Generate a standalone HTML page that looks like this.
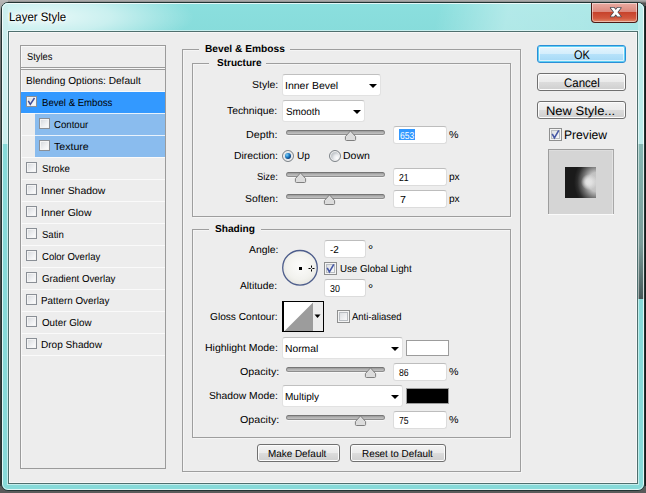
<!DOCTYPE html>
<html>
<head>
<meta charset="utf-8">
<title>Layer Style</title>
<style>
html,body{margin:0;padding:0;}
body{width:646px;height:493px;overflow:hidden;position:relative;background:#1c1c1c;font-family:"Liberation Sans",sans-serif;font-size:10.2px;color:#000;}
*{box-sizing:border-box;}
.abs{position:absolute;}
#bgtop{left:0;top:0;width:646px;height:6px;background:linear-gradient(#b2b2b2,#8c8c8c 2px,#555 3px);}
#bgleft{left:0;top:0;width:8px;height:493px;background:linear-gradient(#b8b8b8,#777 30px,#444 300px,#333);}
#bgbot{left:0;top:486px;width:646px;height:7px;background:#5a5a5a;}
#win{left:1px;top:2px;width:644px;height:489px;border:1px solid #223433;border-radius:7px;background:#87dad9;overflow:hidden;}
#win .hl{left:0;top:0;width:642px;height:487px;border:1px solid rgba(255,255,255,.75);border-radius:6px;}
#titlebg{left:0;top:0;width:642px;height:29px;background:
 radial-gradient(ellipse 150px 34px at 42px 14px,rgba(255,255,255,.8),rgba(255,255,255,.55) 45%,rgba(255,255,255,0) 100%),
 linear-gradient(100deg,rgba(255,255,255,0) 430px,rgba(255,255,255,.35) 500px,rgba(255,255,255,.3) 590px,rgba(255,255,255,.25) 640px),
 linear-gradient(#8bdfde,#87dcdb);}
#lside{left:0;top:0;width:6px;height:141px;background:#cbefee;}
#rside{left:636px;top:0;width:6px;height:141px;background:#bcebea;}
#rdark{left:636px;top:141px;width:6px;height:155px;background:linear-gradient(#86b8b3,#7a9c99 100px,#4b5f5f 150px,#475656);}
.ttl{margin-top:0;font-size:12.3px;line-height:14px;height:14px;text-shadow:0 0 4px #fff,0 0 6px #fff,0 0 8px #fff;}
#close{left:589px;top:0;width:47px;height:20px;border:1px solid #4d1b16;border-top:none;border-radius:0 0 4px 4px;background:linear-gradient(#e9aba2,#dc8a7e 45%,#c7432c 50%,#d2583e 80%,#e08a6a);box-shadow:inset 0 0 0 1px rgba(255,255,255,.45);}
#client{left:8px;top:31px;width:630px;height:453px;border:1px solid #4f6f6e;background:#ededed;box-shadow:inset 0 0 0 1px #f7f7f7,0 0 0 1px rgba(255,255,255,.5);}
.t{position:absolute;white-space:nowrap;line-height:12px;height:12px;transform-origin:0 50%;margin-top:0;}
.b{font-weight:bold;}
#panel{left:20px;top:45px;width:146px;height:424px;border:1px solid #9b9b9b;box-shadow:inset 1px 1px 0 #f8f8f8;}
.row{position:absolute;left:21px;width:144px;height:22px;border-bottom:1px solid #fafafa;}
.cb{position:absolute;width:13px;height:13px;border:1px solid #8e8f8f;background:linear-gradient(135deg,#d4d7db,#f0f1f3 60%,#fff);box-shadow:inset 0 0 0 1px #f4f4f4,inset 0 0 0 2px #b9bdc2;}
.cb.s{width:11px;height:11px;box-shadow:inset 0 0 0 1px #f4f4f4;border-color:#8a8f96;}
.grp{position:absolute;border:1px solid #9e9e9e;box-shadow:1px 1px 0 #f5f5f5,inset 1px 1px 0 #f5f5f5;}
.gap{position:absolute;background:#ededed;height:3px;}
.dd{position:absolute;height:22px;border:1px solid #e2e2e2;border-top-color:#c0c0c0;border-radius:3px;background:#fff;}
.dd i{position:absolute;top:9px;width:0;height:0;border-left:4px solid transparent;border-right:4px solid transparent;border-top:4px solid #000;}
.inp{position:absolute;width:54px;height:18px;border:1px solid #dcdcdc;border-top-color:#bdbdbd;border-radius:3px;background:#fff;}
.trk{position:absolute;left:286px;width:99px;height:5px;border-radius:3px;background:linear-gradient(#9a9a9a,#b8b8b8 60%,#c2c2c2);border:1px solid #888;border-top-color:#767676;border-bottom-color:#8e8e8e;box-shadow:0 1px 0 #f7f7f7;}
.btn{position:absolute;border:1px solid #707070;border-radius:3px;background:linear-gradient(#f3f3f3,#ebebeb 48%,#dcdcdc 52%,#cfcfcf);box-shadow:inset 0 0 0 1px #fcfcfc;}
.big{font-size:12.4px;line-height:14px;height:14px;margin-top:0;}
.sw{position:absolute;left:406px;width:43px;height:16px;border:1px solid #9c9c9c;}
</style>
</head>
<body>
<div class="abs" id="bgtop"></div>
<div class="abs" id="bgleft"></div>
<div class="abs" id="bgbot"></div>
<div class="abs" id="win">
  <div class="abs" id="titlebg"></div>
  <div class="abs" id="lside"></div>
  <div class="abs" id="rside"></div>
  <div class="abs" id="rdark"></div>
  <div class="abs hl"></div>
  <div class="abs" id="close">
    <svg class="abs" style="left:17px;top:3px" width="14" height="12" viewBox="0 0 14 12"><path d="M1.6 1.8 H5 L11.9 10.6 H8.5 Z M8.5 1.8 H11.9 L5 10.6 H1.6 Z" fill="#44464e" stroke="#44464e" stroke-width="1.5" stroke-linejoin="round"/><path d="M1.6 1.8 H5 L11.9 10.6 H8.5 Z M8.5 1.8 H11.9 L5 10.6 H1.6 Z" fill="#fff"/></svg>
  </div>
</div>
<div class="abs" id="client"></div>

<div class="abs" id="panel"></div>
<div class="abs" style="left:21px;top:67px;width:144px;height:3px;border-top:1px solid #9b9b9b;border-bottom:1px solid #9b9b9b;background:#f8f8f8"></div>
<div class="row" style="top:70px"></div>
<div class="row" style="top:92px;background:#3399ff"></div>
<div class="row" style="top:113px;left:35px;width:130px;height:23px;background:#8abcee;border-top:1px solid #e8f2fc;border-bottom:none"></div>
<div class="row" style="top:135px;left:35px;width:130px;height:23px;background:#8abcee;border-top:1px solid #e8f2fc;border-bottom:none"></div>
<div class="abs" style="left:21px;top:135px;width:14px;height:1px;background:#fafafa"></div>
<div class="abs" style="left:21px;top:157px;width:144px;height:1px;background:#fafafa"></div>
<div class="row" style="top:158px"></div><div class="row" style="top:180px"></div><div class="row" style="top:202px"></div><div class="row" style="top:224px"></div><div class="row" style="top:246px"></div><div class="row" style="top:268px"></div><div class="row" style="top:290px"></div><div class="row" style="top:312px"></div><div class="row" style="top:334px"></div>
<div class="cb s" style="left:26px;top:96px"></div><svg class="abs" style="left:26px;top:96px" width="11" height="11" viewBox="0 0 11 11"><path d="M2.3 4.9 L4.3 8.3 L8.5 2" fill="none" stroke="#3f4f9a" stroke-width="1.5"/></svg>
<div class="cb s" style="left:39px;top:118px"></div><div class="cb s" style="left:39px;top:140px"></div>
<div class="cb s" style="left:26px;top:162px"></div><div class="cb s" style="left:26px;top:184px"></div><div class="cb s" style="left:26px;top:206px"></div><div class="cb s" style="left:26px;top:228px"></div><div class="cb s" style="left:26px;top:250px"></div><div class="cb s" style="left:26px;top:272px"></div><div class="cb s" style="left:26px;top:294px"></div><div class="cb s" style="left:26px;top:316px"></div><div class="cb s" style="left:26px;top:338px"></div>

<div class="grp" style="left:182px;top:49px;width:339px;height:423px"></div>
<div class="gap" style="left:199px;top:48px;width:91px"></div>
<div class="grp" style="left:192px;top:63px;width:319px;height:154px"></div>
<div class="gap" style="left:209px;top:62px;width:57px"></div>
<div class="grp" style="left:192px;top:229px;width:319px;height:209px"></div>
<div class="gap" style="left:209px;top:228px;width:52px"></div>

<div class="dd" style="left:282px;top:74px;width:99px"><i style="left:86px"></i></div>
<div class="dd" style="left:282px;top:100px;width:83px"><i style="left:70px"></i></div>
<div class="trk" style="top:130px"></div>
<div class="inp" style="left:393px;top:126px"></div>
<div class="abs" style="left:399px;top:129px;width:16px;height:11px;background:#3399ff"></div>
<div class="t" style="left:399.5px;top:130px;color:#fff;transform:scaleX(0.84) rotate(0.03deg)">653</div>
<div class="trk" style="top:172px"></div>
<div class="inp" style="left:393px;top:168px"></div>
<div class="trk" style="top:194px"></div>
<div class="inp" style="left:393px;top:190px"></div>

<div class="inp" style="left:324px;top:240px;width:42px"></div>
<div class="t" style="left:368px;top:244px;font-size:13px">°</div>
<div class="cb" style="left:324px;top:262px"></div><svg class="abs" style="left:324px;top:262px" width="13" height="13" viewBox="0 0 13 13"><path d="M3.2 5.8 L5.4 9.8 L9.8 2.4" fill="none" stroke="#4557a5" stroke-width="1.6"/></svg>
<div class="inp" style="left:324px;top:279px;width:42px"></div>
<div class="t" style="left:368px;top:283px;font-size:13px">°</div>
<div class="cb" style="left:337px;top:310px"></div>
<div class="dd" style="left:282px;top:337px;width:121px"><i style="left:108px"></i></div>
<div class="sw" style="top:340px;background:#fff"></div>
<div class="trk" style="top:367px"></div>
<div class="inp" style="left:393px;top:363px"></div>
<div class="dd" style="left:282px;top:385px;width:121px"><i style="left:108px"></i></div>
<div class="sw" style="top:388px;background:#000"></div>
<div class="trk" style="top:415px"></div>
<div class="inp" style="left:393px;top:411px"></div>

<svg class="abs" style="left:344px;top:130px" width="13" height="12" viewBox="0 0 13 12"><path d="M6.5 0.9 L11.6 6.6 V9.4 Q11.6 10.5 10.5 10.5 H2.5 Q1.4 10.5 1.4 9.4 V6.6 Z" fill="#dcdcdc" stroke="#7f7f7f" stroke-width="1"/></svg><svg class="abs" style="left:294px;top:172px" width="13" height="12" viewBox="0 0 13 12"><path d="M6.5 0.9 L11.6 6.6 V9.4 Q11.6 10.5 10.5 10.5 H2.5 Q1.4 10.5 1.4 9.4 V6.6 Z" fill="#dcdcdc" stroke="#7f7f7f" stroke-width="1"/></svg><svg class="abs" style="left:323px;top:194px" width="13" height="12" viewBox="0 0 13 12"><path d="M6.5 0.9 L11.6 6.6 V9.4 Q11.6 10.5 10.5 10.5 H2.5 Q1.4 10.5 1.4 9.4 V6.6 Z" fill="#dcdcdc" stroke="#7f7f7f" stroke-width="1"/></svg><svg class="abs" style="left:364px;top:367px" width="13" height="12" viewBox="0 0 13 12"><path d="M6.5 0.9 L11.6 6.6 V9.4 Q11.6 10.5 10.5 10.5 H2.5 Q1.4 10.5 1.4 9.4 V6.6 Z" fill="#dcdcdc" stroke="#7f7f7f" stroke-width="1"/></svg><svg class="abs" style="left:354px;top:415px" width="13" height="12" viewBox="0 0 13 12"><path d="M6.5 0.9 L11.6 6.6 V9.4 Q11.6 10.5 10.5 10.5 H2.5 Q1.4 10.5 1.4 9.4 V6.6 Z" fill="#dcdcdc" stroke="#7f7f7f" stroke-width="1"/></svg>

<div class="abs" style="left:282px;top:150px;width:12px;height:12px;border-radius:6px;border:1px solid #7d8388;background:radial-gradient(circle at 5px 5px,#f4f4f4,#e2e6ea 3.5px,#c9cdd1 5px);box-shadow:inset 0 0 0 1px #f2f2f2"></div>
<div class="abs" style="left:285px;top:153px;width:6px;height:6px;border-radius:3px;background:radial-gradient(circle at 2px 2px,#7fd0f5,#1b78c2 2.4px,#0f3f78 4px)"></div>
<div class="abs" style="left:329px;top:150px;width:12px;height:12px;border-radius:6px;border:1px solid #7d8388;background:radial-gradient(circle at 7px 7px,#fdfdfd,#e9ebee 3px,#c6cace 5.5px);box-shadow:inset 0 0 0 1px #f2f2f2"></div>

<svg class="abs" style="left:281px;top:249px" width="38" height="38" viewBox="0 0 38 38">
<defs><radialGradient id="dg" cx="0.5" cy="0.45" r="0.55"><stop offset="0" stop-color="#fcfcfb"/><stop offset="0.7" stop-color="#f2f2ee"/><stop offset="1" stop-color="#e6e6e0"/></radialGradient></defs>
<circle cx="19" cy="18.8" r="17.3" fill="url(#dg)" stroke="#4e5e8c" stroke-width="1.3"/>
<rect x="18" y="18" width="3" height="3" fill="#000"/>
<path d="M27.5 19.5 H29.7 M31.3 19.5 H33.5 M30.5 16.5 V18.7 M30.5 20.3 V22.5" stroke="#000" stroke-width="1" fill="none"/>
</svg>

<div class="abs" style="left:282px;top:301px;width:42px;height:31px;background:#fff;border:1px solid #000;border-left-width:2px"></div>
<svg class="abs" style="left:284px;top:302px" width="39" height="29" viewBox="0 0 39 29"><path d="M0.5 29 L29 0.5 V29 Z" fill="#9c9c9c"/><rect x="29" y="0" width="10" height="29" fill="#ececec"/><path d="M30.5 12.5 H36.5 L33.5 16 Z" fill="#000"/></svg>

<div class="btn" style="left:257px;top:444px;width:83px;height:18px"></div>
<div class="btn" style="left:350px;top:444px;width:96px;height:18px"></div>
<div class="btn" style="left:537px;top:45px;width:89px;height:18px;border-color:#2c8ed6;background:linear-gradient(#e6f5fd,#d4eefc 48%,#b6e2fa 52%,#a3d8f6);box-shadow:inset 0 0 0 1px #5fd0f5,inset 0 0 0 2px rgba(255,255,255,.6)"></div>
<div class="btn" style="left:537px;top:73px;width:89px;height:18px"></div>
<div class="btn" style="left:537px;top:101px;width:89px;height:18px"></div>
<div class="cb" style="left:549px;top:128px"></div><svg class="abs" style="left:549px;top:128px" width="13" height="13" viewBox="0 0 13 13"><path d="M3.2 5.8 L5.4 9.8 L9.8 2.4" fill="none" stroke="#4557a5" stroke-width="1.6"/></svg>
<div class="abs" style="left:548px;top:149px;width:66px;height:65px;background:#d5d5d5;border:1px solid #9d9d9d;border-right-color:#a8a8a8;border-bottom:none;box-shadow:0 1px 0 #fafafa,inset -1px 0 0 #e2e2e2,inset 0 1px 0 #dddddd"></div>
<div class="abs" style="left:565px;top:167px;width:31px;height:31px;background:radial-gradient(circle at 24px 15px,#e6e6e6 0,#e0e0e0 3px,rgba(222,222,222,0) 8px),radial-gradient(ellipse 22px 27px at 31px 15px,#cdcdcd 0,#c2c2c2 35%,#6c6c6c 62%,#2c2c2c 85%,#1a1a1a 100%),#1a1a1a"></div>

<div id="t_styles" class="t " style="left:27.2px;top:51px;transform:scale(0.911,1) rotate(0.03deg)">Styles</div>
<div id="t_blend" class="t " style="left:26.0px;top:75px;transform:scale(0.993,1) rotate(0.03deg)">Blending Options: Default</div>
<div id="t_bevel" class="t " style="left:41.6px;top:97px;transform:scale(0.941,1) rotate(0.03deg)">Bevel &amp; Emboss</div>
<div id="t_contour" class="t " style="left:54.4px;top:119px;transform:scale(0.944,1) rotate(0.03deg)">Contour</div>
<div id="t_texture" class="t " style="left:54.4px;top:141px;transform:scale(1.04,1) rotate(0.03deg)">Texture</div>
<div id="t_stroke" class="t " style="left:42.0px;top:163px;transform:scale(0.949,1) rotate(0.03deg)">Stroke</div>
<div id="t_ishadow" class="t " style="left:41.0px;top:185px;transform:scale(1.023,1) rotate(0.03deg)">Inner Shadow</div>
<div id="t_iglow" class="t " style="left:41.0px;top:207px;transform:scale(1.024,1) rotate(0.03deg)">Inner Glow</div>
<div id="t_satin" class="t " style="left:42.0px;top:229px;transform:scale(0.938,1) rotate(0.03deg)">Satin</div>
<div id="t_color" class="t " style="left:42.2px;top:251px;transform:scale(0.935,1) rotate(0.03deg)">Color Overlay</div>
<div id="t_grad" class="t " style="left:42.2px;top:273px;transform:scale(0.953,1) rotate(0.03deg)">Gradient Overlay</div>
<div id="t_pat" class="t " style="left:41.4px;top:295px;transform:scale(0.965,1) rotate(0.03deg)">Pattern Overlay</div>
<div id="t_oglow" class="t " style="left:42.2px;top:317px;transform:scale(0.961,1) rotate(0.03deg)">Outer Glow</div>
<div id="t_drop" class="t " style="left:41.4px;top:339px;transform:scale(0.987,1) rotate(0.03deg)">Drop Shadow</div>
<div id="l_style" class="t " style="left:252.0px;top:79px;transform:scale(1.032,1) rotate(0.03deg)">Style:</div>
<div id="l_tech" class="t " style="left:227.0px;top:105px;transform:scale(1.016,1) rotate(0.03deg)">Technique:</div>
<div id="l_depth" class="t " style="left:246.2px;top:129px;transform:scale(1.051,1) rotate(0.03deg)">Depth:</div>
<div id="l_dir" class="t " style="left:233.8px;top:150px;transform:scale(1.022,1) rotate(0.03deg)">Direction:</div>
<div id="l_size" class="t " style="left:257.2px;top:171px;transform:scale(0.923,1) rotate(0.03deg)">Size:</div>
<div id="l_soft" class="t " style="left:245.2px;top:193px;transform:scale(1.023,1) rotate(0.03deg)">Soften:</div>
<div id="l_angle" class="t " style="left:248.6px;top:244px;transform:scale(1.02,1) rotate(0.03deg)">Angle:</div>
<div id="l_alt" class="t " style="left:240.0px;top:280px;transform:scale(1.006,1) rotate(0.03deg)">Altitude:</div>
<div id="l_gloss" class="t " style="left:209.8px;top:311px;transform:scale(0.996,1) rotate(0.03deg)">Gloss Contour:</div>
<div id="l_hl" class="t " style="left:205.2px;top:342px;transform:scale(1.029,1) rotate(0.03deg)">Highlight Mode:</div>
<div id="l_op1" class="t " style="left:239.6px;top:366px;transform:scale(1.049,1) rotate(0.03deg)">Opacity:</div>
<div id="l_sh" class="t " style="left:208.8px;top:390px;transform:scale(1.012,1) rotate(0.03deg)">Shadow Mode:</div>
<div id="l_op2" class="t " style="left:239.6px;top:414px;transform:scale(1.049,1) rotate(0.03deg)">Opacity:</div>
<div id="m_up" class="t " style="left:296.8px;top:150px;transform:scale(0.991,1) rotate(0.03deg)">Up</div>
<div id="m_down" class="t " style="left:343.0px;top:150px;transform:scale(1.032,1) rotate(0.03deg)">Down</div>
<div id="m_pct1" class="t " style="left:449.0px;top:129px;transform:scale(1.05,1) rotate(0.03deg)">%</div>
<div id="m_px1" class="t " style="left:449.0px;top:171px;transform:scale(0.993,1) rotate(0.03deg)">px</div>
<div id="m_px2" class="t " style="left:449.0px;top:193px;transform:scale(0.993,1) rotate(0.03deg)">px</div>
<div id="m_pct2" class="t " style="left:449.0px;top:366px;transform:scale(1.05,1) rotate(0.03deg)">%</div>
<div id="m_pct3" class="t " style="left:449.0px;top:414px;transform:scale(1.05,1) rotate(0.03deg)">%</div>
<div id="m_ugl" class="t " style="left:339.8px;top:263px;transform:scale(0.952,1) rotate(0.03deg)">Use Global Light</div>
<div id="m_aa" class="t " style="left:352.4px;top:311px;transform:scale(0.931,1) rotate(0.03deg)">Anti-aliased</div>
<div id="d_style" class="t " style="left:285.4px;top:80px;transform:scale(1.032,1) rotate(0.03deg)">Inner Bevel</div>
<div id="d_tech" class="t " style="left:286.4px;top:106px;transform:scale(0.971,1) rotate(0.03deg)">Smooth</div>
<div id="d_norm" class="t " style="left:285.2px;top:343px;transform:scale(1.012,1) rotate(0.03deg)">Normal</div>
<div id="d_mult" class="t " style="left:285.2px;top:391px;transform:scale(0.984,1) rotate(0.03deg)">Multiply</div>
<div id="i_21" class="t " style="left:399.4px;top:172px;transform:scale(0.85,1) rotate(0.03deg)">21</div>
<div id="i_7" class="t " style="left:399.6px;top:194px;transform:scale(1.05,1) rotate(0.03deg)">7</div>
<div id="i_m2" class="t " style="left:330.0px;top:244px;transform:scale(0.973,1) rotate(0.03deg)">-2</div>
<div id="i_30" class="t " style="left:329.8px;top:283px;transform:scale(0.871,1) rotate(0.03deg)">30</div>
<div id="i_86" class="t " style="left:399.0px;top:367px;transform:scale(0.85,1) rotate(0.03deg)">86</div>
<div id="i_75" class="t " style="left:399.0px;top:415px;transform:scale(0.85,1) rotate(0.03deg)">75</div>
<div id="g_bevel" class="t b" style="left:205.0px;top:43px;transform:scale(1.0,1) rotate(0.03deg)">Bevel &amp; Emboss</div>
<div id="g_struct" class="t b" style="left:216.6px;top:57px;transform:scale(0.982,1) rotate(0.03deg)">Structure</div>
<div id="g_shade" class="t b" style="left:215.4px;top:223px;transform:scale(0.996,1) rotate(0.03deg)">Shading</div>
<div id="b_make" class="t " style="left:268.2px;top:448px;transform:scale(0.972,1) rotate(0.03deg)">Make Default</div>
<div id="b_reset" class="t " style="left:361.6px;top:448px;transform:scale(0.97,1) rotate(0.03deg)">Reset to Default</div>
<div id="b_ok" class="t big" style="left:573.8px;top:48px;transform:scale(0.885,1) rotate(0.03deg)">OK</div>
<div id="b_cancel" class="t big" style="left:564.4px;top:76px;transform:scale(0.927,1) rotate(0.03deg)">Cancel</div>
<div id="b_new" class="t big" style="left:545.8px;top:104px;transform:scale(1.046,1) rotate(0.03deg)">New Style...</div>
<div id="b_prev" class="t big" style="left:564.2px;top:128px;transform:scale(0.978,1) rotate(0.03deg)">Preview</div>
<div id="t_title" class="t ttl" style="left:9.0px;top:11px;transform:scale(0.928,1) rotate(0.03deg)">Layer Style</div>
</body>
</html>
